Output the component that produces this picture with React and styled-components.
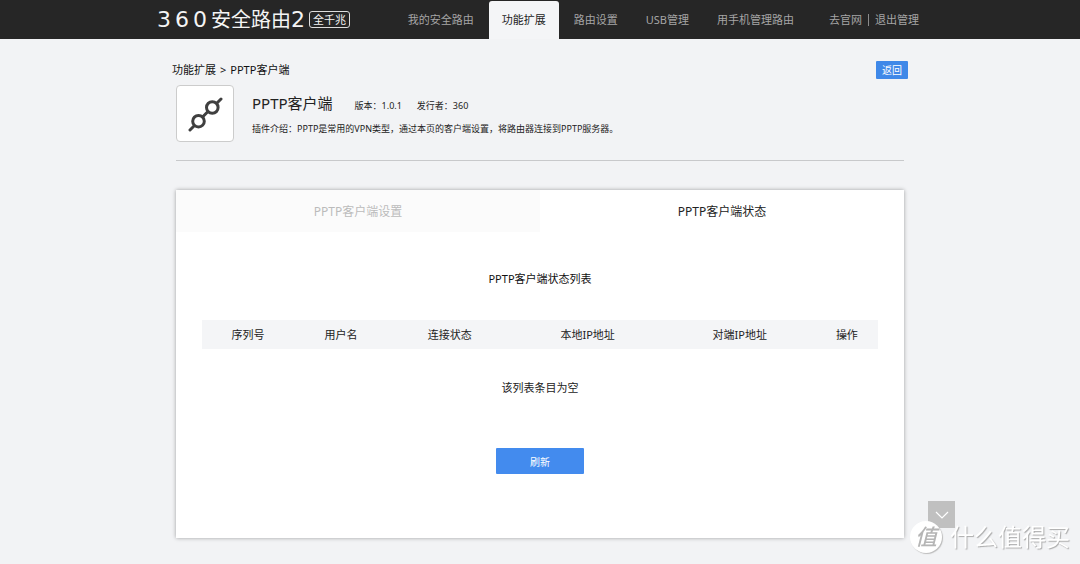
import { useState } from 'react';
import styled, { createGlobalStyle } from 'styled-components';

const navItems = ['我的安全路由', '功能扩展', '路由设置', 'USB管理', '用手机管理路由'];
const tabItems = ['PPTP客户端设置', 'PPTP客户端状态'];

// width is a share of the whole table
const columns = [
  { name: '序列号', width: '13.6%' },
  { name: '用户名', width: '13.9%' },
  { name: '连接状态', width: '18.3%' },
  { name: '本地IP地址', width: '22.5%' },
  { name: '对端IP地址', width: '22.5%' },
  { name: '操作', width: '9.2%' },
];

function App() {
  const [nav, setNav] = useState(1);
  const [tab, setTab] = useState(1);

  return (
    <>
      <GlobalStyle />
      <Header>
        <HeaderInner>
          <Logo>
            <LogoDigits>
              <span>3</span>
              <span>6</span>
              <span>0</span>
            </LogoDigits>
            <LogoName>安全路由</LogoName>
            <LogoDigits>2</LogoDigits>
            <LogoBadge>全千兆</LogoBadge>
          </Logo>
          <Nav>
            {navItems.map((item, i) => (
              <NavLink key={item} href="#" $active={i === nav} onClick={() => setNav(i)}>
                {item}
              </NavLink>
            ))}
          </Nav>
          <UserLinks>
            <UserLink href="#">去官网</UserLink>
            <UserLink href="#">退出管理</UserLink>
          </UserLinks>
        </HeaderInner>
      </Header>

      <Main>
        <TopRow>
          <Breadcrumb>
            <span>功能扩展</span>
            <span>&gt;</span>
            <span>PPTP客户端</span>
          </Breadcrumb>
          <BackButton type="button">返回</BackButton>
        </TopRow>

        <Body>
          <Plugin>
            <PluginIcon>
              <PptpIcon />
            </PluginIcon>
            <div>
              <PluginHead>
                <PluginName>PPTP客户端</PluginName>
                <Meta>版本：1.0.1</Meta>
                <Meta>发行者：360</Meta>
              </PluginHead>
              <Description>
                插件介绍：PPTP是常用的VPN类型，通过本页的客户端设置，将路由器连接到PPTP服务器。
              </Description>
            </div>
          </Plugin>

          <Card>
            <Tabs role="tablist">
              {tabItems.map((item, i) => (
                <Tab
                  key={item}
                  type="button"
                  role="tab"
                  aria-selected={i === tab}
                  $active={i === tab}
                  onClick={() => setTab(i)}
                >
                  {item}
                </Tab>
              ))}
            </Tabs>
            <Panel>
              <ListTitle>PPTP客户端状态列表</ListTitle>
              <Table>
                <thead>
                  <tr>
                    {columns.map((col) => (
                      <Th key={col.name} $width={col.width}>{col.name}</Th>
                    ))}
                  </tr>
                </thead>
                <tbody>
                  <tr>
                    <Empty colSpan={columns.length}>该列表条目为空</Empty>
                  </tr>
                </tbody>
              </Table>
              <RefreshButton type="button">刷新</RefreshButton>
            </Panel>
          </Card>
        </Body>
      </Main>

      <ScrollButton type="button" aria-label="向下">
        <svg width="14" height="14" viewBox="0 0 14 14" fill="none" stroke="#fff" strokeWidth="1.2">
          <path d="M1 4 L7 10 L13 4" />
        </svg>
      </ScrollButton>
      <Watermark>
        <WatermarkMark>值</WatermarkMark>
        <span>什么值得买</span>
      </Watermark>
    </>
  );
}

/* two nodes joined by a line */
function PptpIcon() {
  return (
    <svg width="36" height="36" viewBox="0 0 36 36" fill="none" stroke="#3f3f3f" strokeWidth="3" strokeLinecap="round">
      <path d="M3 34 L7 30 M16 20.5 L20.5 16 M30 7 L34 3" />
      <circle cx="11.5" cy="25.2" r="5.8" />
      <circle cx="25.3" cy="11.5" r="5.8" />
    </svg>
  );
}

export default App;

const GlobalStyle = createGlobalStyle`
  * {
    box-sizing: border-box;
  }

  body {
    margin: 0;
    background: #f2f3f5;
    color: #222;
    font-family: "Noto Sans", "Noto Sans CJK SC", sans-serif;
    font-size: 11px;
    line-height: 16px;
  }

  button {
    font-family: inherit;
    border: 0;
    padding: 0;
    cursor: pointer;
  }

  a {
    text-decoration: none;
  }
`;

const Header = styled.header`
  background: #262626;
`;

const HeaderInner = styled.div`
  display: flex;
  align-items: center;
  max-width: 766px;
  height: 39px;
  margin: 0 auto;
`;

const Logo = styled.div`
  display: flex;
  align-items: center;
  color: #f4f4f4;
  line-height: 24px;
`;

const LogoDigits = styled.span`
  display: flex;
  gap: 4px;
  font-family: "DejaVu Sans", sans-serif;
  font-size: 22px;
`;

const LogoName = styled.span`
  margin-left: 4px;
  font-size: 20px;
`;

const LogoBadge = styled.span`
  margin-left: 4px;
  padding: 0 3px;
  border: 1px solid #ddd;
  border-radius: 3px;
  font-size: 11px;
  line-height: 15px;
`;

const Nav = styled.nav`
  display: flex;
  align-self: stretch;
  gap: 2px;
  margin-left: auto;
  padding-top: 1px;
`;

const NavLink = styled.a`
  display: flex;
  align-items: center;
  padding: 0 13px;
  border-radius: 3px 3px 0 0;
  background: ${(props) => (props.$active ? '#f4f5f7' : 'transparent')};
  color: ${(props) => (props.$active ? '#222' : '#a5a5a5')};
`;

const UserLinks = styled.div`
  display: flex;
  margin: 0 4px 0 22px;
`;

const UserLink = styled.a`
  color: #a5a5a5;
  line-height: 12px;

  & + & {
    margin-left: 6px;
    padding-left: 6px;
    border-left: 1px solid #8a8a8a;
  }
`;

const Main = styled.main`
  max-width: 736px;
  margin: 0 auto;
  padding: 22px 0 26px;
`;

const TopRow = styled.div`
  display: flex;
  align-items: center;
  justify-content: space-between;
`;

const Breadcrumb = styled.div`
  display: flex;
  gap: 4px;
  color: #111;
`;

const BackButton = styled.button`
  padding: 0 6px;
  border-radius: 1px;
  background: #3f88e8;
  color: #fff;
  font-size: 10px;
  line-height: 18px;
`;

const Body = styled.div`
  padding: 0 4px;
`;

const Plugin = styled.section`
  display: flex;
  gap: 18px;
  padding: 6px 0 18px;
  border-bottom: 1px solid #c8c9cb;
`;

const PluginIcon = styled.div`
  display: flex;
  align-items: center;
  justify-content: center;
  width: 58px;
  height: 57px;
  border: 1px solid #ccc;
  border-radius: 4px;
  background: #fff;
`;

const PluginHead = styled.div`
  display: flex;
  align-items: baseline;
  padding-top: 6px;
`;

const PluginName = styled.h1`
  margin: 0;
  font-weight: 400;
  font-size: 15px;
  line-height: 24px;
`;

const Meta = styled.span`
  margin-left: 22px;
  font-size: 9px;

  & + & {
    margin-left: 15px;
  }
`;

const Description = styled.p`
  margin: 6px 0 0;
  font-size: 9px;
`;

const Card = styled.section`
  margin-top: 29px;
  background: #fff;
  box-shadow: 0 0 4px rgba(0, 0, 0, 0.35);
`;

const Tabs = styled.div`
  display: flex;
`;

const Tab = styled.button`
  flex: 1;
  height: 42px;
  background: ${(props) => (props.$active ? '#fff' : '#fbfbfb')};
  color: ${(props) => (props.$active ? '#222' : '#bbb')};
  font-size: 12px;
`;

const Panel = styled.div`
  display: flex;
  flex-direction: column;
  align-items: center;
  padding: 39px 26px 64px;
`;

const ListTitle = styled.h2`
  margin: 0 0 33px;
  color: #111;
  font-weight: 400;
  font-size: 11px;
`;

const Table = styled.table`
  width: 100%;
  table-layout: fixed;
  border-collapse: collapse;
  text-align: center;
`;

const Th = styled.th`
  width: ${(props) => props.$width};
  height: 29px;
  padding: 0;
  background: #f4f5f7;
  font-weight: 400;
`;

const Empty = styled.td`
  height: 77px;
  padding: 0;
`;

const RefreshButton = styled.button`
  width: 88px;
  height: 26px;
  margin-top: 22px;
  border-radius: 1px;
  background: #438bee;
  color: #fff;
  font-size: 10px;
`;

const ScrollButton = styled.button`
  position: fixed;
  right: 125px;
  bottom: 36px;
  display: flex;
  align-items: center;
  justify-content: center;
  width: 27px;
  height: 27px;
  background: #c0c0c0;
`;

const Watermark = styled.div`
  position: fixed;
  right: 10px;
  bottom: 11px;
  display: flex;
  align-items: center;
  gap: 8px;
  color: #fff;
  font-size: 24px;
  line-height: 32px;
  text-shadow: 1px 1px 1px #aaa;
`;

const WatermarkMark = styled.span`
  width: 32px;
  height: 32px;
  border-radius: 50%;
  background: #fff;
  box-shadow: 1px 1px 1px #bbb;
  color: #b5b5b5;
  font-style: italic;
  font-weight: 500;
  font-size: 22px;
  line-height: 30px;
  text-align: center;
  text-shadow: none;
`;
